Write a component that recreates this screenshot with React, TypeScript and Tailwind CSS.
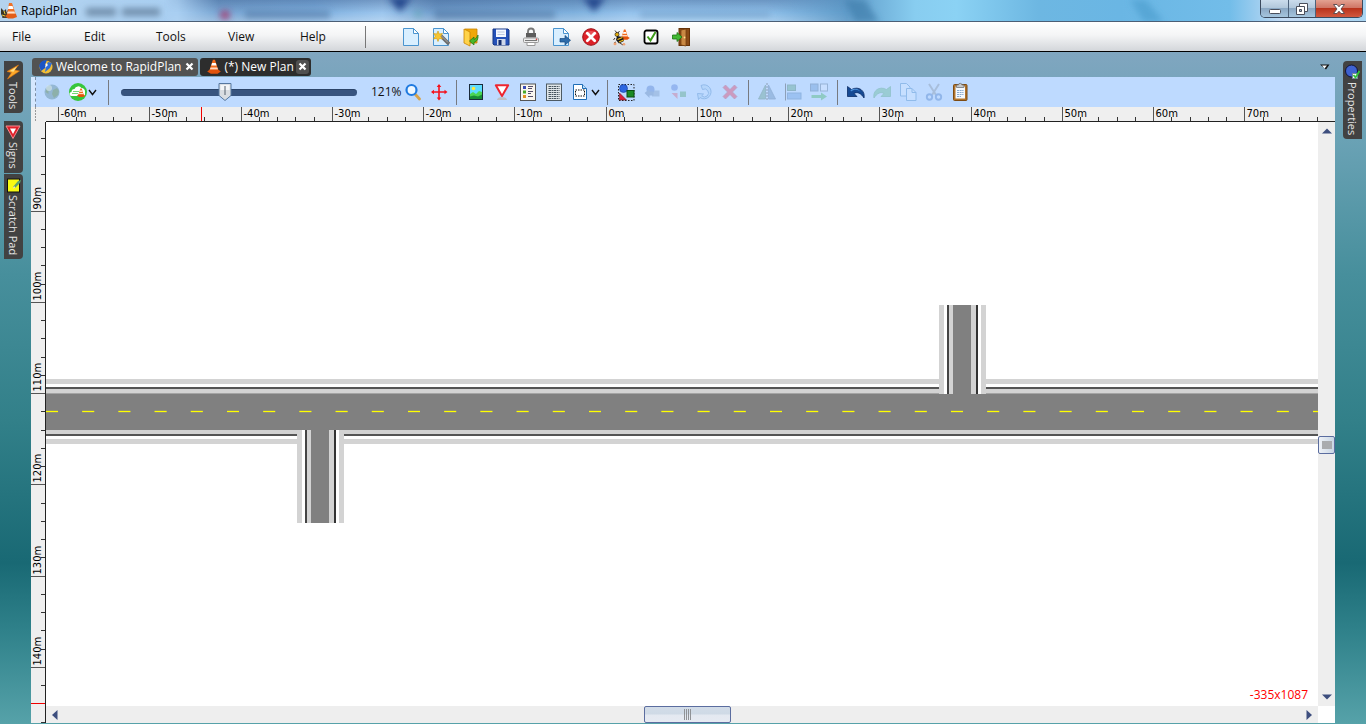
import React, { useEffect, useState } from 'react';

type IconProps = { children: React.ReactNode; faded?: boolean };

const Icon = ({ children, faded }: IconProps) => (
  <svg width="20" height="20" viewBox="0 0 20 20" aria-hidden="true" className={faded ? 'shrink-0 opacity-35' : 'shrink-0'}>
    {children}
  </svg>
);

/* ---------- shared drawings ---------- */

const Page = () => (
  <>
    <path d="M2.500 1.500h10l5 5v12h-15z" fill="#d9efff" stroke="#4a94cf" />
    <path d="M12.500 1.500v5h5z" fill="#fff" stroke="#4a94cf" strokeLinejoin="round" />
  </>
);

const Cone = () => (
  <>
    <path d="M8.600 1h2.600l4.600 14H4z" fill="#f26a1b" />
    <path d="M7.600 5h4.600l1 3H6.600z" fill="#fff" />
    <path d="M5.700 10.500h8.500l.9 2.500H4.800z" fill="#ffd9c0" />
    <path d="M1.500 15.500l3-2h11l3 2-4 3H6z" fill="#e2520c" />
  </>
);

const Shapes = () => (
  <>
    <path d="M3.500 11l7 7h-7z" fill="#d9203c" stroke="#7b1020" strokeWidth=".6" />
    <circle cx="7.500" cy="6.500" r="4" fill="#2c66e0" stroke="#123a9c" strokeWidth=".6" />
    <rect x="11" y="8.500" width="7" height="6.500" fill="#1a8a24" stroke="#0b4d12" />
  </>
);

/* ---------- file toolbar icons ---------- */

const NewIcon = () => <Icon><Page /></Icon>;
const WizardIcon = () => (
  <Icon>
    <Page />
    <path d="M9 8l9 9" stroke="#6b6b6b" strokeWidth="3.600" />
    <path d="M9 7.500l8 8" stroke="#aaa" strokeWidth="1" />
    <path d="M7 4l1.300 3 3.200-.6-1.800 2.800 1.800 2.800-3.200-.6L7 14.500l-1.300-3.100-3.200.6 1.800-2.800-1.800-2.800 3.200.6z" fill="#f6c531" stroke="#cf9a12" strokeWidth=".6" />
  </Icon>
);
const OpenIcon = () => (
  <Icon>
    <path d="M4 2h12v14H6z" fill="#f0a80a" stroke="#c98300" strokeWidth=".8" />
    <path d="M3 2l6 3v14l-6-3z" fill="#ffd34a" stroke="#c98300" strokeWidth=".8" />
    <path d="M17 8c.5 4-1 6.500-4 7.500v2.500l-4.500-4 4.500-4v2.500c2-1 3-2.500 4-4.500z" fill="#49b82c" stroke="#22730f" strokeWidth=".7" />
  </Icon>
);
const SaveIcon = () => (
  <Icon>
    <path d="M2 2h15l1 1v15H3l-1-1z" fill="#2551b8" stroke="#173887" />
    <rect x="5" y="2.500" width="10" height="7.500" fill="#f5f8ff" />
    <path d="M6.500 5h7M6.500 7.500h7" stroke="#bac7e0" />
    <rect x="6" y="12" width="8.500" height="6" fill="#cfd8ea" />
    <rect x="7.500" y="13" width="3" height="5" fill="#142c6b" />
  </Icon>
);
const PrinterIcon = () => (
  <Icon>
    <path d="M7 7V4.500a3 3 0 016 0V7" fill="none" stroke="#777" strokeWidth="1.800" />
    <rect x="5" y="6" width="10" height="4.500" fill="#5c5c5c" />
    <rect x="2.500" y="11" width="15" height="4.500" rx="1" fill="#ececec" stroke="#9b9b9b" />
    <path d="M4 13.500h12" stroke="#777" />
    <circle cx="15.500" cy="12.300" r=".8" fill="#c33" />
    <path d="M6 15.500h8v3H6z" fill="#fff" stroke="#999" />
  </Icon>
);
const ExportIcon = () => (
  <Icon>
    <Page />
    <path d="M9 11.500h5V8.500l5.500 4.800-5.500 4.700v-3H9z" fill="#2d6cab" stroke="#16497f" strokeWidth=".7" />
  </Icon>
);
const CloseIcon = () => (
  <Icon>
    <circle cx="10" cy="10" r="8.300" fill="#dc2027" stroke="#9d1218" />
    <path d="M3.500 7.500a7 5.500 0 0113 0z" fill="#f0747a" opacity=".6" />
    <path d="M6.300 6.300l7.400 7.400M13.700 6.300l-7.400 7.400" stroke="#fff" strokeWidth="2.800" strokeLinecap="round" />
  </Icon>
);
const BeeIcon = () => (
  <Icon>
    <g transform="translate(8 2) scale(.58)"><Cone /></g>
    <circle cx="6" cy="7.500" r="2" fill="#e9b10e" stroke="#222" strokeWidth=".7" />
    <path d="M6 9l6 1 1 4-5 2.500L5 13z" fill="#181818" />
    <path d="M6.500 12.500l5-2M8 15l4.500-2" stroke="#f7bf18" strokeWidth="1.300" />
    <path d="M4 3.500l2 2.500M8.500 4L7 6M4 11l-1.500 2M9 16l3 2M5 15l-2 1" stroke="#2c2118" strokeWidth=".9" />
    <circle cx="4" cy="16.800" r="1.500" fill="#f0a273" />
    <circle cx="13" cy="17.200" r="1.300" fill="#f0a273" />
  </Icon>
);
const CheckIcon = () => (
  <Icon>
    <rect x="3.500" y="3.500" width="13" height="13" rx="2" fill="#fff" stroke="#000" strokeWidth="1.800" />
    <path d="M6.500 9.500l3 4L14.500 5" fill="none" stroke="#3f9c1a" strokeWidth="2" />
  </Icon>
);
const ExitIcon = () => (
  <Icon>
    <rect x="8" y="1.500" width="10.500" height="17" fill="#8a4a16" stroke="#653208" />
    <path d="M10 3l5-1v17l-5-1z" fill="#c98843" stroke="#6d390d" strokeWidth=".7" />
    <circle cx="13.500" cy="10.500" r=".9" fill="#ffe08a" />
    <path d="M1.500 8h4.500V5.500l5 4.500-5 4.500V12H1.500z" fill="#42b832" stroke="#1b7413" strokeWidth=".8" />
  </Icon>
);

/* ---------- plan toolbar icons ---------- */

const GlobeIcon = () => (
  <Icon>
    <circle cx="10" cy="10" r="7.500" fill="#94b7d3" />
    <path d="M4.500 6c2-2 4-2 5-1l-1 3-2 1v3l-3-2zM11 8l4-2 2 3-1 4-4 3-2-4z" fill="#8db0aa" />
    <circle cx="7" cy="6" r="3" fill="#d3e6f0" opacity=".7" />
  </Icon>
);
const CloudConeIcon = () => (
  <Icon>
    <circle cx="10" cy="10" r="9" fill="#37c63b" />
    <path d="M3.500 14a2 2 0 010-4 3 3 0 013-3 4 4 0 017-1 3.500 3.500 0 013.500 4v4z" fill="#fff" />
    <path d="M5 9.500h6M4 11.500h6" stroke="#37c63b" strokeWidth=".7" />
    <g transform="translate(8.300 6) scale(.48)"><Cone /></g>
  </Icon>
);
const ZoomIcon = () => (
  <Icon>
    <path d="M12 12l4.500 5" stroke="#d8a34a" strokeWidth="2.800" strokeLinecap="round" />
    <circle cx="8.500" cy="8" r="5" fill="#eef7ff" stroke="#1f7ae0" strokeWidth="2.200" />
  </Icon>
);
const CrossIcon = () => (
  <Icon>
    <path d="M10 3v14M3 10h14" stroke="#f5121d" strokeWidth="1.600" />
    <path d="M10 2l2.300 3H7.700zM10 18.500l2.300-3H7.700zM2 10l3-2.300v4.600zM18.500 10l-3-2.300v4.600z" fill="#f5121d" />
  </Icon>
);
const PictureIcon = () => (
  <Icon>
    <rect x="3.500" y="2.500" width="13" height="15" fill="#5edcff" stroke="#1a2a3a" />
    <path d="M4 12l3-2 3 2 3-3 3 1v7H4z" fill="#4ad552" />
    <path d="M4 14.500l4-1 4 1 4-2V17H4z" fill="#178f35" />
    <circle cx="7.500" cy="6.500" r="1.800" fill="#ffe93b" />
  </Icon>
);
const GiveWayIcon = () => (
  <Icon>
    <path d="M5 18c0-4 10-4 10 0z" fill="#bfc1c6" />
    <path d="M3.800 3.300h12.400L10 14z" fill="#fff" stroke="#ee2630" strokeWidth="2" strokeLinejoin="round" />
  </Icon>
);
const LegendIcon = () => (
  <Icon>
    <rect x="2.500" y="2" width="15" height="16.500" fill="#f9f6ee" stroke="#555" />
    <rect x="5" y="4" width="3" height="3" fill="#3a4cb7" />
    <rect x="5" y="8.500" width="3" height="3" fill="#4aa928" />
    <rect x="5" y="13" width="3" height="3" fill="#e29020" />
    <path d="M10 4.500h5M10 6.500h4M10 9.500h5M10 11.500h3M10 14.500h5" stroke="#554d6b" />
  </Icon>
);
const NotesIcon = () => (
  <Icon>
    <rect x="2.500" y="2" width="15" height="16.500" fill="#dfe6ea" stroke="#4d5a63" />
    <path d="M4.500 4.500h11M4.500 6.500h11M4.500 8.500h11M4.500 10.500h11M4.500 12.500h11M4.500 14.500h11M4.500 16.500h11" stroke="#46545e" strokeDasharray="2.500 .6 1.500 .5" />
  </Icon>
);
const PrintAreaIcon = () => (
  <Icon>
    <path d="M3.500 2.500h9l4 4v11h-13z" fill="#fff" stroke="#1f6db5" />
    <path d="M12.500 2.500v4h4" fill="#b9dcf8" stroke="#1f6db5" />
    <rect x="5.500" y="8" width="9" height="6" fill="none" stroke="#111" strokeDasharray="1.500 1" />
  </Icon>
);
const SelectAllIcon = () => (
  <Icon>
    <rect x="2.500" y="2.500" width="15.500" height="16" fill="none" stroke="#222" strokeDasharray="1.500 1.500" />
    <Shapes />
  </Icon>
);
const SendBackIcon = () => (
  <Icon faded>
    <rect x="10" y="8.500" width="7.500" height="6" fill="#7695bd" />
    <circle cx="8.500" cy="7.500" r="4" fill="#4573c9" />
    <path d="M2.500 11l5-4v2.500h4v4h-4V16z" fill="#5a7eb0" />
  </Icon>
);
const UngroupIcon = () => (
  <Icon faded>
    <circle cx="6.500" cy="5.500" r="3.300" fill="#4a76d6" />
    <path d="M3.500 11l6 6V11z" fill="#d55c78" />
    <rect x="12" y="9.500" width="6" height="5.500" fill="#4a9c6d" />
  </Icon>
);
const RotateIcon = () => (
  <Icon faded>
    <path d="M7 3.500a7 7 0 11-1 12l-1.500 2-1-6 6 .5-1.800 1.800a4 4 0 10.800-6.300z" fill="#a3cdf5" stroke="#3476bd" strokeWidth=".9" />
  </Icon>
);
const DeleteIcon = () => (
  <Icon faded>
    <path d="M5.500 3L10 7.500 14.500 3l2.500 2.500-4.500 4.500 4.500 4.500-2.500 2.500-4.500-4.500L5.500 17 3 14.500 7.500 10 3 5.500z" fill="#e6244a" stroke="#a3304d" strokeWidth=".7" />
  </Icon>
);
const MirrorIcon = () => (
  <Icon faded>
    <path d="M8.500 3v14h-7z" fill="#5a977e" stroke="#40705e" strokeWidth=".8" />
    <path d="M11.500 3v14h7z" fill="#5a82b0" stroke="#3e618c" strokeWidth=".8" />
    <path d="M10 1v18" stroke="#333" strokeDasharray="2 1" />
  </Icon>
);
const AlignIcon = () => (
  <Icon faded>
    <path d="M2.500 1.500v17" stroke="#333" />
    <rect x="4.500" y="3" width="8" height="5.500" fill="#4e9d7c" stroke="#3a7560" />
    <rect x="4.500" y="11" width="13.500" height="6" fill="#5e98dc" stroke="#3f70aa" />
  </Icon>
);
const DistributeIcon = () => (
  <Icon faded>
    <rect x="1.500" y="2" width="7.500" height="7" fill="#5a8fcd" stroke="#3f648f" />
    <rect x="11.500" y="2" width="7" height="7" fill="#dcebff" stroke="#506c8b" />
    <path d="M2.500 13h9.500v-2.500l6 4-6 4V16H2.500z" fill="#39ae5a" />
  </Icon>
);
const UndoIcon = () => (
  <Icon>
    <path d="M1.500 4.500v10h9.500l-3-3c3-2 7-.500 10 4.500 1.500-7-5-12.500-12.500-8.500z" fill="#164a94" stroke="#0b2c66" strokeWidth=".8" strokeLinejoin="round" />
    <path d="M5 9.500c4-3 8-1.500 10 1-2-4-6-5-10.500-2.500z" fill="#4f93dc" />
  </Icon>
);
const RedoIcon = () => (
  <Icon faded>
    <path d="M18.500 4.500v10H9l3-3c-3-2-7-.500-10 4.500C.500 9 7 3.500 14.500 7.500z" fill="#58b585" stroke="#3b946a" strokeWidth=".8" strokeLinejoin="round" />
  </Icon>
);
const CopyIcon = () => (
  <Icon faded>
    <path d="M2.500 1.500h6l3.500 3.500v9H2.500z" fill="#d6eaff" stroke="#3d83c4" />
    <path d="M8.500 6.500h5.500l4 4v8H8.500z" fill="#d6eaff" stroke="#3d83c4" />
    <path d="M14 6.500v4h4" fill="none" stroke="#3d83c4" />
  </Icon>
);
const CutIcon = () => (
  <Icon faded>
    <path d="M5 2l7 11M15 2L8 13" stroke="#7f8b9a" strokeWidth="2" />
    <circle cx="5.500" cy="15" r="2.700" fill="none" stroke="#3f76c4" strokeWidth="1.900" />
    <circle cx="14.500" cy="15" r="2.700" fill="none" stroke="#3f76c4" strokeWidth="1.900" />
  </Icon>
);
const PasteIcon = () => (
  <Icon>
    <rect x="3.500" y="2.500" width="13.500" height="16" rx="1" fill="#b0732c" stroke="#7d4b12" />
    <rect x="5.500" y="4.500" width="9.500" height="12" fill="#f4f9ff" />
    <path d="M7 8.500h6.500M7 10.500h6.500M7 12.500h6.500M7 14.500h4" stroke="#88a9cf" strokeDasharray="2 .6" />
    <path d="M6.500 5.500V3h2a1.700 1.700 0 013.400 0h2v2.500z" fill="#c6c9cc" stroke="#73767a" strokeWidth=".8" />
  </Icon>
);

/* ---------- window chrome ---------- */

const TitleBar = () => (
  <header className="relative flex h-[22px] shrink-0 items-start overflow-hidden border-b border-[#4c5f76] bg-[linear-gradient(90deg,#b4d3ee_0%,#a9cff2_13%,#79a6d3_16%,#7fb0df_23%,#9cc6ee_28%,#6f9ccb_32%,#7fb1de_42%,#94c2ec_46%,#8fc0ea_56%,#5f9bc9_62%,#88cdf0_67%,#8bd2f4_70%,#6db7e2_76%,#6ab6e4_82%,#72bde9_90%,#c5dcf5_94%,#a9d5f2_100%)]">
    <div className="absolute inset-0 bg-[linear-gradient(180deg,rgba(40,70,120,.35)_0%,rgba(255,255,255,0)_60%,rgba(255,255,255,.25)_100%)] [mask-image:linear-gradient(90deg,transparent_12%,#000_16%,#000_56%,transparent_64%)]" />
    <svg className="absolute inset-0 h-full w-full" aria-hidden="true">
      <defs><filter id="haze"><feGaussianBlur stdDeviation="3" /></filter></defs>
      <g filter="url(#haze)">
        <rect x="86" y="8" width="30" height="8" fill="#64809c" opacity=".8" />
        <rect x="122" y="8" width="38" height="8" fill="#64809c" opacity=".8" />
        <circle cx="225" cy="15" r="5" fill="#a5366a" opacity=".8" />
        <rect x="245" y="11" width="85" height="7" fill="#4c6f9d" opacity=".6" />
        <path d="M388-3h24l-12 15z" fill="#27488e" />
        <circle cx="418" cy="14" r="4" fill="#4fa3a0" opacity=".4" />
        <rect x="435" y="11" width="120" height="7" fill="#4c6f9d" opacity=".6" />
        <path d="M582-3h24l-12 15z" fill="#27488e" />
        <rect x="640" y="12" width="130" height="5" fill="#6892bc" opacity=".6" />
        <path d="M845 0h20l14 22h-24z" fill="#3f7dab" opacity=".7" />
        <path d="M1130 0h16l18 22h-20z" fill="#4a9bcb" opacity=".6" />
      </g>
    </svg>
    <div className="relative flex h-full items-center gap-1 pl-px">
      <svg width="16" height="18" viewBox="0 0 16 18" aria-hidden="true">
        <path d="M0 6l3 3 2-2 1 9H2l-2-4z" fill="#3a3526" />
        <path d="M1 16l6-8 3 8z" fill="#4b4330" />
        <path d="M1 13l3 1M3 9l1 3" stroke="#ecc637" />
        <path d="M8 1h3l4 12H6z" fill="#ee7229" />
        <path d="M7.500 4h4l1 3h-5.500z" fill="#fff" />
        <path d="M6.500 9.500h7l.6 2H6z" fill="#ffe3cc" />
        <path d="M4 14l3-2h8l1 3-4 1.500H7z" fill="#e35d16" />
      </svg>
      <h1 className="text-[12px] leading-4 text-black">RapidPlan</h1>
    </div>
    <div className="relative mr-[3px] ml-auto flex h-[18px] overflow-hidden rounded-b-[5px] border border-t-0 border-[#3b4a5e]">
      <button aria-label="Minimize" className="flex w-7 items-center justify-center border-r border-[#4d627b] bg-[linear-gradient(180deg,#cbdcec_0%,#b0c6da_48%,#8ba8c4_50%,#a5c5de_100%)]">
        <svg width="14" height="14" viewBox="0 0 14 14"><rect x="1.500" y="7.500" width="11" height="4" rx="1" fill="#fff" stroke="#4a4f5c" /></svg>
      </button>
      <button aria-label="Restore" className="flex w-[27px] items-center justify-center border-r border-[#4d627b] bg-[linear-gradient(180deg,#cbdcec_0%,#b0c6da_48%,#8ba8c4_50%,#a5c5de_100%)]">
        <svg width="14" height="14" viewBox="0 0 14 14"><path d="M4.500 1.500h8v8h-8z" fill="#fff" stroke="#4a4f5c" /><path d="M1.500 4.500h8v8h-8z" fill="#fff" stroke="#4a4f5c" /><path d="M4.500 7.500h2v2h-2z" fill="#9db5cb" stroke="#4a4f5c" /></svg>
      </button>
      <button aria-label="Close window" className="flex w-[46px] items-center justify-center bg-[linear-gradient(180deg,#e3a191_0%,#cf7565_46%,#b9331c_50%,#d2593f_100%)]">
        <svg width="14" height="14" viewBox="0 0 14 14"><path d="M1.500 2.500h3.500l2 2.300 2-2.300h3.500L9 7l3.500 4.500H9L7 9.200l-2 2.300H1.500L5 7z" fill="#fff" stroke="#53464c" strokeWidth=".9" /></svg>
      </button>
    </div>
  </header>
);

const menus = ['File', 'Edit', 'Tools', 'View', 'Help'];
const fileActions: [string, React.FC][] = [
  ['New', NewIcon], ['New from template', WizardIcon], ['Open', OpenIcon], ['Save', SaveIcon], ['Print', PrinterIcon],
  ['Export', ExportIcon], ['Close', CloseIcon], ['Bee', BeeIcon], ['Check', CheckIcon], ['Exit', ExitIcon],
];

const MenuBar = () => (
  <div className="flex h-[30px] shrink-0 items-center border-b border-black bg-[linear-gradient(180deg,#ffffff_0%,#f4f5f6_45%,#d3d6da_100%)]">
    <nav className="flex pt-px">
      {menus.map((m) => (
        <button key={m} className="w-18 pl-3 text-left text-[12px] leading-4 text-[#111]">{m}</button>
      ))}
    </nav>
    <div className="ml-[5px] h-[22px] w-px bg-[#777]" />
    <div className="ml-[30px] flex">
      {fileActions.map(([label, Glyph]) => (
        <button key={label} aria-label={label} className="flex w-[30px] justify-center"><Glyph /></button>
      ))}
    </div>
  </div>
);

const CloseX = () => (
  <svg width="9" height="9" viewBox="0 0 9 9" aria-hidden="true"><path d="M1.500 1.500l6 6M7.500 1.500l-6 6" stroke="#fff" strokeWidth="2.200" /></svg>
);

const TabStrip = () => (
  <div className="flex h-[25px] items-center gap-[2px] pt-1 pr-1 pl-px">
    <div className="flex h-[18px] items-center rounded-[3px] bg-[#525252] pr-[2px] pl-1.5">
      <svg width="16" height="16" viewBox="1 0 16 16" aria-hidden="true">
        <circle cx="9" cy="8" r="6.500" fill="#f0bd35" />
        <path d="M2 7c1-4 4-6 8-6l-2 5 3 1-7 5z" fill="#1c55c4" />
        <path d="M11 3l4 1-2 5-5 4 1-5z" fill="#2f6ed6" />
        <path d="M9 4l2 2-3 3z" fill="#fff" />
      </svg>
      <button className="ml-[2px] text-[12px] leading-[18px] text-white">Welcome to RapidPlan</button>
      <button aria-label="Close Welcome to RapidPlan" className="ml-[2px] flex h-[14px] w-[13px] items-center justify-center"><CloseX /></button>
    </div>
    <div className="flex h-[18px] items-center rounded-[3px] bg-[#2d2d2d] pr-[2px] pl-1.5">
      <svg width="16" height="16" viewBox="0 0 20 20" aria-hidden="true"><Cone /></svg>
      <button className="ml-[2px] text-[12px] leading-[18px] text-white">(*) New Plan</button>
      <button aria-label="Close New Plan" className="ml-[2px] flex h-[14px] w-[13px] items-center justify-center rounded-[3px] bg-[#505050]"><CloseX /></button>
    </div>
    <button aria-label="Tab list" className="ml-auto flex h-4 w-3 items-center justify-center">
      <svg width="10" height="6" viewBox="0 0 10 6"><path d="M0 .5h9.500L6 5.500z" fill="#111" /><path d="M2 1.500h5L4.500 4.500z" fill="#fff" /></svg>
    </button>
  </div>
);

const Rule = () => <div className="h-[25px] w-px shrink-0 bg-[#777a80]" />;
const Chevron = ({ label }: { label: string }) => (
  <button aria-label={label} className="flex w-[9px] items-center justify-center">
    <svg width="9" height="7" viewBox="0 0 9 7"><path d="M1 1l3.500 4.500L8 1" fill="none" stroke="#111" strokeWidth="1.400" /></svg>
  </button>
);
const ToolGroup = ({ items }: { items: [string, React.FC][] }) => (
  <div className="flex">
    {items.map(([label, Glyph]) => (
      <button key={label} aria-label={label} className="flex w-[26px] justify-center"><Glyph /></button>
    ))}
  </div>
);

const PlanToolbar = () => {
  const [pos, setPos] = useState(44);
  return (
    <div className="flex h-[30px] items-center bg-[#bedaff]">
      <div className="h-full w-[5px] border-r border-dashed border-[#7c8da5] bg-[#d6e8ff]" />
      <div className="ml-[3px]"><ToolGroup items={[['Map', GlobeIcon], ['Online maps', CloudConeIcon]]} /></div>
      <div className="-ml-[3px] mr-[11px] flex"><Chevron label="Map options" /></div>
      <Rule />
      <div className="relative ml-3 flex h-5 w-[236px] items-center">
        <input
          type="range" min="0" max="100" value={pos} aria-label="Zoom level"
          onChange={(e) => setPos(Number(e.target.value))}
          className="h-[7px] w-full appearance-none rounded-full border-t border-[#2b4469] bg-[#38547f] [&::-webkit-slider-thumb]:h-5 [&::-webkit-slider-thumb]:w-3 [&::-webkit-slider-thumb]:appearance-none [&::-webkit-slider-thumb]:bg-transparent"
        />
        <svg width="14" height="20" viewBox="0 0 14 20" className="pointer-events-none absolute top-0 -translate-x-1/2" style={{ left: `${pos}%` }} aria-hidden="true">
          <path d="M1 1.500h12v12l-6 5-6-5z" fill="#d9dde2" stroke="#55779f" />
          <path d="M2.500 3h9v5h-9z" fill="#f3f5f7" />
          <path d="M7 4v9" stroke="#55606d" />
        </svg>
      </div>
      <span className="ml-3.5 w-[29px] text-[12px] leading-4 text-[#111]">121%</span>
      <ToolGroup items={[['Zoom', ZoomIcon], ['Pan', CrossIcon]]} />
      <div className="ml-1"><Rule /></div>
      <div className="ml-[6px]">
        <ToolGroup items={[['Picture', PictureIcon], ['Sign', GiveWayIcon], ['Legend', LegendIcon], ['Notes', NotesIcon], ['Print area', PrintAreaIcon]]} />
      </div>
      <div className="-ml-[2px] mr-[7px] flex"><Chevron label="Print area options" /></div>
      <Rule />
      <div className="ml-[5px]">
        <ToolGroup items={[['Select all', SelectAllIcon], ['Send back', SendBackIcon], ['Ungroup', UngroupIcon], ['Rotate', RotateIcon], ['Delete', DeleteIcon]]} />
      </div>
      <div className="ml-[5px]"><Rule /></div>
      <div className="ml-[5px]">
        <ToolGroup items={[['Mirror', MirrorIcon], ['Align', AlignIcon], ['Distribute', DistributeIcon]]} />
      </div>
      <div className="ml-[5px]"><Rule /></div>
      <div className="ml-[5px]">
        <ToolGroup items={[['Undo', UndoIcon], ['Redo', RedoIcon], ['Copy', CopyIcon], ['Cut', CutIcon], ['Paste', PasteIcon]]} />
      </div>
    </div>
  );
};

/* ---------- rulers ---------- */

const MINOR = 18.25;
const crisp = (v: number) => Math.floor(v) + 0.5;

const useWindowSize = () => {
  const [size, setSize] = useState({ width: window.innerWidth, height: window.innerHeight });
  useEffect(() => {
    const update = () => setSize({ width: window.innerWidth, height: window.innerHeight });
    window.addEventListener('resize', update);
    return () => window.removeEventListener('resize', update);
  }, []);
  return size;
};

const TopRuler = () => {
  const length = useWindowSize().width - 62;
  const count = Math.floor((length - 575) / MINOR) + 31;
  const ticks = Array.from({ length: count }, (_, i) => i - 30);
  return (
    <svg className="block h-[15px] w-full bg-[#efefef] font-['DejaVu_Sans',Verdana,sans-serif] text-[10px]" aria-label="Horizontal ruler">
      <path d="M4.500 0v15" stroke="#999" strokeDasharray="2 1" />
      {ticks.map((n) => {
        const x = crisp(575 + n * MINOR);
        const major = n % 5 === 0;
        return (
          <g key={n}>
            <path d={`M${x} ${major ? 0 : 10}V15`} stroke={major ? '#555' : '#333'} />
            {major && <text x={x + 2} y="10" fill="#000">{`${n * 2}m`}</text>}
          </g>
        );
      })}
      <rect x="170" y="0" width="1" height="14" fill="#f00000" />
      <rect x="15" y="14" width="100%" height="1" fill="#222" />
    </svg>
  );
};

const LeftRuler = () => {
  const length = useWindowSize().height - 122;
  const count = Math.floor((length - 89) / MINOR) + 5;
  const ticks = Array.from({ length: count }, (_, i) => i + 41);
  return (
    <svg className="h-full w-[15px] shrink-0 bg-[#efefef] font-['DejaVu_Sans',Verdana,sans-serif] text-[10px]" aria-label="Vertical ruler">
      {ticks.map((n) => {
        const y = crisp(89 + (n - 45) * MINOR);
        const major = n % 5 === 0;
        return (
          <g key={n}>
            <path d={`M${major ? 0 : 10} ${y}H15`} stroke={major ? '#555' : '#333'} />
            {major && <text transform={`translate(10 ${y - 2}) rotate(-90)`} fill="#000">{`${n * 2}m`}</text>}
          </g>
        );
      })}
      <rect x="0" y="581" width="14" height="1" fill="#f00000" />
      <rect x="14" y="0" width="1" height="100%" fill="#222" />
    </svg>
  );
};

/* ---------- plan ---------- */

const SideRoad = ({ x, y, height }: { x: number; y: number; height: number }) => (
  <svg x={x} y={y} width="47" height={height}>
    <rect width="47" height={height} fill="#fff" />
    <rect width="5" height={height} fill="#d3d3d3" />
    <rect x="42" width="5" height={height} fill="#d3d3d3" />
    <rect x="8" width="2" height={height} fill="#444" />
    <rect x="10" width="4" height={height} fill="#d3d3d3" />
    <rect x="14" width="18" height={height} fill="#808080" />
    <rect x="32" width="5" height={height} fill="#d3d3d3" />
    <rect x="37" width="2" height={height} fill="#333" />
  </svg>
);

const Plan = () => (
  <svg className="absolute inset-0 h-full w-full" role="img" aria-label="Road plan">
    <rect y="257" width="100%" height="5" fill="#d3d3d3" />
    <rect y="265" width="100%" height="2" fill="#555" />
    <rect y="267" width="100%" height="4" fill="#d3d3d3" />
    <rect y="271" width="100%" height="1" fill="#a4a4a4" />
    <rect y="307" width="100%" height="1" fill="#a4a4a4" />
    <rect y="308" width="100%" height="4" fill="#d3d3d3" />
    <rect y="312" width="100%" height="2" fill="#555" />
    <rect y="317" width="100%" height="5" fill="#d3d3d3" />
    <SideRoad x={893} y={183} height={89} />
    <SideRoad x={251} y={307} height={94} />
    <rect y="272" width="100%" height="36" fill="#808080" />
    <line x1="0" x2="100%" y1="289.500" y2="289.500" stroke="#a8a85a" strokeWidth="2" strokeDasharray="12 24.200" />
    <line x1="0" x2="100%" y1="289.500" y2="289.500" stroke="#ffff00" strokeDasharray="12 24.200" />
  </svg>
);

const Arrow = ({ d }: { d: string }) => (
  <svg width="10" height="10" viewBox="0 0 10 10" aria-hidden="true"><path d={d} fill="#3d4e7e" /></svg>
);

const Workspace = () => (
  <div className="flex min-h-0 flex-1">
    <LeftRuler />
    <div className="grid min-w-0 flex-1 grid-cols-[minmax(0,1fr)_17px] grid-rows-[minmax(0,1fr)_17px] bg-white">
      <main className="relative flex items-end justify-end bg-white pr-[10px] pb-[3px]">
        <Plan />
        <span className="relative text-[12px] leading-4 text-[#ff0000]">-335x1087</span>
      </main>
      <div className="flex flex-col items-stretch bg-[#eee]">
        <button aria-label="Scroll up" className="flex h-[18px] items-center justify-center"><Arrow d="M0 7.500l5-5 5 5z" /></button>
        <div className="flex-[296]" />
        <button aria-label="Vertical scroll thumb" className="flex h-[18px] items-center justify-center rounded-[2px] border border-[#5b6d9f] bg-[linear-gradient(90deg,#eef1f6,#c9d6e4)]">
          <span className="h-2 w-[10px] bg-[#a9abae]" />
        </button>
        <div className="flex-[234]" />
        <button aria-label="Scroll down" className="flex h-[18px] items-center justify-center"><Arrow d="M0 2.500h10l-5 5z" /></button>
      </div>
      <div className="flex items-stretch bg-[#eee]">
        <button aria-label="Scroll left" className="flex w-[18px] items-center justify-center"><Arrow d="M7.500 0v10l-5.500-5z" /></button>
        <div className="flex-[580]" />
        <button aria-label="Horizontal scroll thumb" className="flex w-[87px] items-center justify-center rounded-[2px] border border-[#5b6d9f] bg-[linear-gradient(180deg,#d2dce8_0%,#cfdae6_48%,#e4e9f1_52%,#e6eaf2_100%)]">
          <svg width="9" height="11" viewBox="0 0 9 11"><path d="M1.500 0v11M3.500 0v11M5.500 0v11M7.500 0v11" stroke="#8f9296" /></svg>
        </button>
        <div className="flex-[569]" />
        <button aria-label="Scroll right" className="flex w-[18px] items-center justify-center"><Arrow d="M2.500 0v10l5.500-5z" /></button>
      </div>
      <div className="bg-white" />
    </div>
  </div>
);

/* ---------- side docks ---------- */

const DockTab = ({ label, right, children }: { label: string; right?: boolean; children: React.ReactNode }) => (
  <button
    className={
      right
        ? 'flex w-[19px] flex-col items-center gap-[2px] rounded-l-[4px] bg-[#424242] pt-[3px] pr-[2px] pb-1'
        : 'flex w-[19px] flex-col items-center gap-[2px] rounded-r-[4px] bg-[#424242] pt-[3px] pr-[2px] pb-1'
    }
  >
    <svg width="16" height="16" viewBox="0 0 16 16" aria-hidden="true">{children}</svg>
    <span className="text-[11px] leading-4 text-[#e4e4e4] [writing-mode:vertical-rl]">{label}</span>
  </button>
);

export default function App() {
  return (
    <div className="flex h-screen flex-col overflow-hidden font-['Open_Sans','Noto_Sans',sans-serif]">
      <TitleBar />
      <MenuBar />
      <div className="flex min-h-0 flex-1 bg-[linear-gradient(180deg,#80a6c0_0%,#6aa2b5_13%,#478f9c_33%,#328089_55%,#196974_76%,#2f818a_86%,#56a2a9_100%)]">
        <aside className="flex w-[31px] shrink-0 flex-col pt-[9px] pl-1">
          <DockTab label="Tools">
            <path d="M13.500 1L2 7.500l4.500 1L2.500 15 14.500 7l-5-1z" fill="#fda92a" stroke="#e0760d" strokeWidth=".6" />
            <path d="M12 2.500L5 7l3.500.700z" fill="#ffdf83" />
          </DockTab>
          <div className="mt-2 mb-px">
            <DockTab label="Signs">
              <path d="M1 2h14L8 14.500z" fill="#e1202a" stroke="#f58a8f" />
              <path d="M5 4.500h6L8 10z" fill="#fff" />
            </DockTab>
          </div>
          <DockTab label="Scratch Pad">
            <rect x="2.500" y="2" width="12" height="13" fill="#f8fb12" stroke="#111" />
            <path d="M8 10l5-6 3-1-1 3-5 5z" fill="#5ca36d" />
            <path d="M8 11.500l1-2.500 1.500 1.500z" fill="#f4e4cc" />
          </DockTab>
        </aside>
        <section className="flex min-w-0 flex-1 flex-col pb-px">
          <TabStrip />
          <PlanToolbar />
          <TopRuler />
          <Workspace />
        </section>
        <aside className="flex w-[31px] shrink-0 flex-col items-end pt-[9px] pr-1">
          <DockTab label="Properties" right>
            <circle cx="7.500" cy="7" r="6" fill="#3f62d0" stroke="#10153a" />
            <rect x="8.500" y="9.500" width="5" height="5" fill="#fff" stroke="#789" />
            <path d="M9.500 11l2 2.500L15.500 7" fill="none" stroke="#31c43a" strokeWidth="1.800" />
          </DockTab>
        </aside>
      </div>
    </div>
  );
}
